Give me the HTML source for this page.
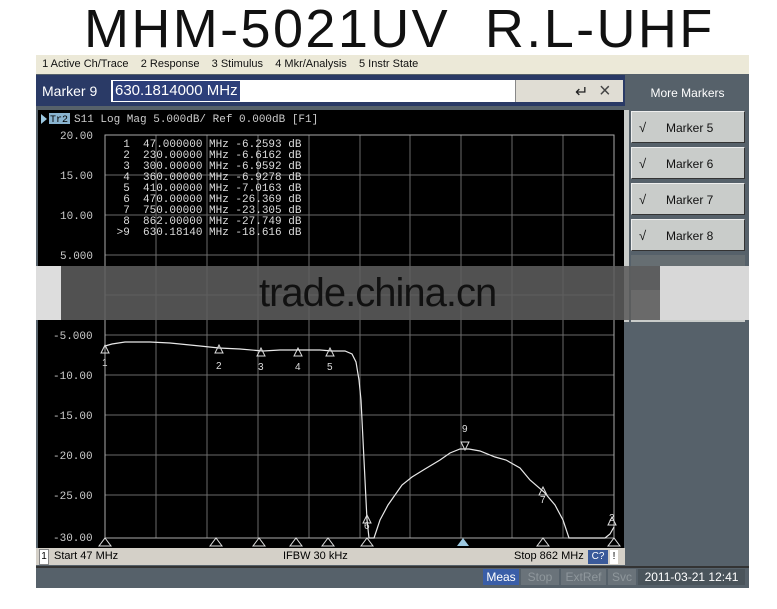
<!DOCTYPE html>
<html><head><meta charset="utf-8"><style>
body{margin:0;width:777px;height:609px;background:#fff;position:relative;overflow:hidden;font-family:"Liberation Sans",sans-serif}
.a{position:absolute}
.title{left:84px;top:1px;font-size:54px;line-height:56px;color:#111;white-space:pre;letter-spacing:2.4px}
.btn{position:absolute;left:631px;width:114px;height:32px;background:#c9ccca;border:1px solid #eee;border-right-color:#333;border-bottom-color:#333;font-size:12px;color:#111;line-height:32px;box-sizing:border-box}
.btn span{position:absolute;left:34px}
.btn i{position:absolute;left:7px;font-style:normal;font-size:13px}
svg text{white-space:pre}
</style></head><body>
<div class="a title">MHM-5021UV  R.L-UHF</div>
<div class="a" style="left:36px;top:55px;width:713px;height:533px;background:#56616a"></div>
<div class="a" style="left:36px;top:55px;width:713px;height:19px;background:#ece9d8;font-size:11px;line-height:19px;color:#111;white-space:pre">  1 Active Ch/Trace    2 Response    3 Stimulus    4 Mkr/Analysis    5 Instr State</div>
<div class="a" style="left:36px;top:75px;width:589px;height:31px;background:#2a3a66"></div>
<div class="a" style="left:42px;top:81px;color:#fff;font-size:14px;line-height:20px">Marker 9</div>
<div class="a" style="left:111px;top:80px;width:511px;height:22px;background:#fff"></div>
<div class="a" style="left:113px;top:81px;background:#2d3f7a;color:#fff;font-size:15px;line-height:20px;padding:0 2px">630.1814000 MHz</div>
<div class="a" style="left:515px;top:80px;width:107px;height:22px;background:#e0ddd4;border-left:1px solid #888"></div>
<div class="a" style="left:575px;top:82px;font-size:16px;color:#222">&#8629;</div>
<div class="a" style="left:599px;top:80px;font-size:20px;color:#444;line-height:22px">&#215;</div>
<div class="a" style="left:626px;top:75px;width:123px;height:35px;background:#56616a;color:#fff;font-size:12px;line-height:36px;text-align:center">More Markers</div>
<div class="btn" style="top:111px"><i>&#8730;</i><span>Marker 5</span></div>
<div class="btn" style="top:147px"><i>&#8730;</i><span>Marker 6</span></div>
<div class="btn" style="top:183px"><i>&#8730;</i><span>Marker 7</span></div>
<div class="btn" style="top:219px"><i>&#8730;</i><span>Marker 8</span></div>
<div class="a" style="left:631px;top:255px;width:114px;height:35px;background:#666e72"></div>
<div class="a" style="left:631px;top:290px;width:114px;height:32px;background:#c9ccca"></div>
<div class="a" style="left:624px;top:110px;width:5px;height:212px;background:#c9ccca"></div>
<svg class="a" style="left:0;top:0" width="777" height="609" viewBox="0 0 777 609">
<rect x="38" y="110" width="586" height="438" fill="#000"/>
<g stroke="#6a6a6a" stroke-width="1">
<path d="M105 175H614M105 215H614M105 255H614M105 295H614M105 335H614M105 375H614M105 415H614M105 455H614M105 495H614"/>
<path d="M156 135V538M207 135V538M258 135V538M309 135V538M360 135V538M410 135V538M461 135V538M512 135V538M563 135V538"/>
</g>
<rect x="105" y="135" width="509" height="403" fill="none" stroke="#aaa"/>
<path d="M41 114l6 5-6 5z" fill="#9cc8e0"/>
<rect x="49" y="113" width="21" height="11" fill="#8ab4d0"/>
<g font-family="Liberation Mono,monospace" font-size="11" fill="#ccc">
<text x="50" y="122" fill="#000" font-size="10">Tr2</text>
<text x="74" y="122">S11 Log Mag 5.000dB/ Ref 0.000dB [F1]</text>
<text x="60" y="139">20.00</text><text x="60" y="179">15.00</text><text x="60" y="219">10.00</text><text x="60" y="259">5.000</text>
<text x="53" y="339">-5.000</text><text x="53" y="379">-10.00</text><text x="53" y="419">-15.00</text><text x="53" y="459">-20.00</text><text x="53" y="499">-25.00</text><text x="53" y="541">-30.00</text>
</g>
<g font-family="Liberation Mono,monospace" font-size="11" fill="#ddd">
<text x="110" y="147">  1  47.000000 MHz -6.2593 dB</text>
<text x="110" y="158">  2  230.00000 MHz -6.6162 dB</text>
<text x="110" y="169">  3  300.00000 MHz -6.9592 dB</text>
<text x="110" y="180">  4  360.00000 MHz -6.9278 dB</text>
<text x="110" y="191">  5  410.00000 MHz -7.0163 dB</text>
<text x="110" y="202">  6  470.00000 MHz -26.369 dB</text>
<text x="110" y="213">  7  750.00000 MHz -23.305 dB</text>
<text x="110" y="224">  8  862.00000 MHz -27.749 dB</text>
<text x="110" y="235"> &gt;9  630.18140 MHz -18.616 dB</text>
</g>
<polyline fill="none" stroke="#e8e8e8" stroke-width="1.2" points="105,346 112,344 125,342 150,342 170,343 200,346 219,348 240,349 263,351 280,350 300,350 320,350 332,351 345,351 352,354 356,362 359,380 361,400 363,440 365,480 367,520 369,538 374,538 380,520 388,505 395,495 402,485 412,477 425,469 440,460 450,453 460,449 469,449 480,451 495,457 506,460 520,468 530,480 544,492 555,505 563,520 569,538 605,538 610,534 614,527"/>
<g fill="none" stroke="#ddd" stroke-width="1">
<path d="M101,353h8l-4,-8z M215,353h8l-4,-8z M257,356h8l-4,-8z M294,356h8l-4,-8z M326,356h8l-4,-8z M461,442h8l-4,8z M539,495h8l-4,-8z M363,523h8l-4,-8z M608,525h8l-4,-8z"/>
<path d="M99,546h12l-6,-8z M210,546h12l-6,-8z M253,546h12l-6,-8z M290,546h12l-6,-8z M322,546h12l-6,-8z M361,546h12l-6,-8z M537,546h12l-6,-8z M608,546h12l-6,-8z"/>
</g>
<path d="M457,546h12l-6,-8z" fill="#9cc8e0"/>
<g font-family="Liberation Sans,sans-serif" font-size="10" fill="#ddd">
<text x="102" y="366">1</text><text x="216" y="369">2</text><text x="258" y="370">3</text><text x="295" y="370">4</text><text x="327" y="370">5</text><text x="462" y="432">9</text><text x="540" y="503">7</text><text x="364" y="529">6</text><text x="609" y="521">2</text>
</g>
<rect x="36" y="266" width="713" height="54" fill="#5c5c5c" opacity="0.88"/>
<rect x="36" y="266" width="25" height="54" fill="#ddd"/>
<rect x="660" y="266" width="89" height="54" fill="#d8d8d8"/>
<text x="259" y="306" font-family="Liberation Sans,sans-serif" font-size="40" fill="#111" letter-spacing="-1">trade.china.cn</text>
</svg>
<div class="a" style="left:36px;top:548px;width:589px;height:17px;background:#d4d0c8;font-size:11px;line-height:17px;color:#111"></div>
<div class="a" style="left:39px;top:549px;width:8px;height:14px;border:1px solid #888;background:#fff;font-size:10px;line-height:14px;text-align:center">1</div>
<div class="a" style="left:54px;top:548px;font-size:11px;line-height:17px">Start 47 MHz</div>
<div class="a" style="left:283px;top:548px;font-size:11px;line-height:17px">IFBW 30 kHz</div>
<div class="a" style="left:514px;top:548px;font-size:11px;line-height:17px">Stop 862 MHz</div>
<div class="a" style="left:588px;top:550px;width:20px;height:14px;background:#3a5a9a;color:#fff;font-size:10px;line-height:14px;text-align:center">C?</div>
<div class="a" style="left:610px;top:550px;width:8px;height:14px;background:#fff;font-size:10px;line-height:14px;text-align:center">!</div>
<div class="a" style="left:36px;top:566px;width:713px;height:2px;background:#333"></div>
<div class="a" style="left:483px;top:569px;width:36px;height:16px;background:#3a5ea8;color:#fff;font-size:12px;line-height:16px;text-align:center">Meas</div>
<div class="a" style="left:521px;top:569px;width:38px;height:16px;background:#6a737a;color:#8f979c;font-size:12px;line-height:16px;text-align:center">Stop</div>
<div class="a" style="left:561px;top:569px;width:45px;height:16px;background:#6a737a;color:#8f979c;font-size:12px;line-height:16px;text-align:center">ExtRef</div>
<div class="a" style="left:608px;top:569px;width:28px;height:16px;background:#6a737a;color:#8f979c;font-size:12px;line-height:16px;text-align:center">Svc</div>
<div class="a" style="left:638px;top:569px;width:107px;height:16px;background:#4a545b;color:#fff;font-size:12px;line-height:16px;text-align:center">2011-03-21 12:41</div>
</body></html>
